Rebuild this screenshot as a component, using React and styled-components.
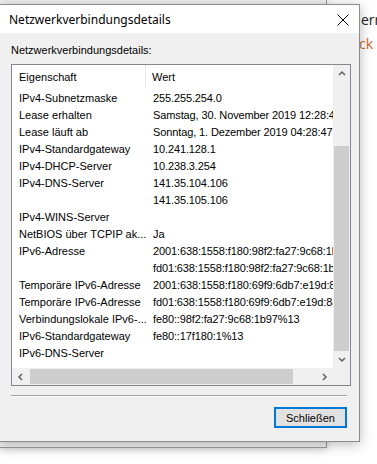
import styled, { createGlobalStyle } from 'styled-components';

const Global = createGlobalStyle`
  html, body { margin: 0; padding: 0; background: #fff; overflow: hidden; }
  #root { width: 377px; height: 464px; }
`;

const Desktop = styled.div`
  position: relative;
  width: 377px;
  height: 464px;
  background: #fff;
  overflow: hidden;
  font-family: 'Liberation Sans', Arial, sans-serif;
`;

const PageText = styled.div`
  position: absolute;
  left: ${p => p.$x}px;
  top: ${p => p.$y}px;
  white-space: nowrap;
  font-family: 'Open Sans', sans-serif;
  font-size: 14px;
  line-height: 18px;
  color: ${p => p.$color || '#222'};
`;

const BackWindow = styled.div`
  position: absolute;
  left: -2px;
  top: -2px;
  width: 328px;
  height: 449px;
  background: #f0f0f0;
  border-right: 1px solid #9a9a9a;
  border-bottom: 1px solid #9a9a9a;
  box-shadow: 0 2px 8px rgba(0, 0, 0, 0.18);
`;

const Dialog = styled.div`
  position: absolute;
  left: -1px;
  top: 4px;
  width: 359px;
  height: 436px;
  border: 1px solid #8c8c8c;
  background: #f0f0f0;
  box-shadow: 0 2px 12px rgba(0, 0, 0, 0.28);
  display: flex;
  flex-direction: column;
`;

const TitleBar = styled.div`
  height: 28px;
  background: #fff;
  display: flex;
  align-items: center;
  justify-content: space-between;
  padding: 0 10px 0 9px;
  font-family: 'Noto Sans', 'Open Sans', sans-serif;
  font-size: 12px;
  color: #000;
`;

const Close = styled.svg`
  width: 12px;
  height: 12px;
  margin-top: 1px;
`;

const Body = styled.div`
  flex: 1;
  display: flex;
  flex-direction: column;
  padding: 10px 10px 0 11px;
`;

const Label = styled.div`
  font-size: 11px;
  color: #000;
  height: 14px;
  line-height: 14px;
  margin-bottom: 7px;
`;

const ListView = styled.div`
  width: 338px;
  height: 320px;
  border: 1px solid #828790;
  background: #fff;
  display: grid;
  grid-template-columns: 1fr 17px;
  grid-template-rows: 1fr 17px;
`;

const Viewport = styled.div`
  overflow: hidden;
`;

const Header = styled.div`
  height: 24px;
  display: grid;
  grid-template-columns: 134px 1fr;
  font-size: 11px;
  color: #000;
  margin-bottom: 1px;
`;

const HeadCell = styled.div`
  display: flex;
  align-items: center;
  padding-left: ${p => (p.$first ? 7 : 6)}px;
  border-right: ${p => (p.$first ? '1px solid #e5e5e5' : 'none')};
  white-space: nowrap;
`;

const Row = styled.div`
  height: 17px;
  display: grid;
  grid-template-columns: 134px 1fr;
  font-size: 11px;
  line-height: 17px;
  color: #000;
`;

const Cell = styled.div`
  padding-left: 7px;
  white-space: nowrap;
  overflow: hidden;
  letter-spacing: ${p => (p.$first ? 0 : -0.12)}px;
`;

const VScroll = styled.div`
  background: #f0f0f0;
  display: flex;
  flex-direction: column;
  align-items: center;
`;

const HScroll = styled.div`
  background: #f0f0f0;
  display: flex;
  align-items: center;
`;

const Corner = styled.div`
  background: #f0f0f0;
`;

const Arrow = styled.div`
  width: 17px;
  height: 17px;
  flex: none;
  display: flex;
  align-items: center;
  justify-content: center;
`;

const VThumb = styled.div`
  width: 15px;
  margin-top: 64px;
  flex: 1;
  background: #cdcdcd;
`;

const HThumb = styled.div`
  height: 15px;
  width: 263px;
  margin-left: 1px;
  background: #cdcdcd;
`;

const Spacer = styled.div`
  flex: 1;
`;

const Separator = styled.div`
  width: 336px;
  height: 1px;
  background: #a0a0a0;
  border-bottom: 1px solid #fff;
  margin-top: 9px;
`;

const Footer = styled.div`
  display: flex;
  justify-content: flex-end;
  padding: 10px 1px 0 0;
`;

const Button = styled.button`
  width: 73px;
  height: 21px;
  box-sizing: border-box;
  border: 2px solid #0078d7;
  background: #e1e1e1;
  font-family: 'Liberation Sans', Arial, sans-serif;
  font-size: 11px;
  color: #000;
  padding: 0;
  margin-right: 1px;
`;

const Chevron = ({ dir }) => {
  const pts = {
    up: '1,5 4,2 7,5',
    down: '1,2 4,5 7,2',
    left: '5,1 2,4 5,7',
    right: '2,1 5,4 2,7',
  }[dir];
  return (
    <svg width="8" height="8" viewBox="0 0 8 8">
      <polyline points={pts} fill="none" stroke="#606060" strokeWidth="1.5" />
    </svg>
  );
};

const rows = [
  ['IPv4-Subnetzmaske', '255.255.254.0'],
  ['Lease erhalten', 'Samstag, 30. November 2019 12:28:47'],
  ['Lease läuft ab', 'Sonntag, 1. Dezember 2019 04:28:47'],
  ['IPv4-Standardgateway', '10.241.128.1'],
  ['IPv4-DHCP-Server', '10.238.3.254'],
  ['IPv4-DNS-Server', '141.35.104.106'],
  ['', '141.35.105.106'],
  ['IPv4-WINS-Server', ''],
  ['NetBIOS über TCPIP ak...', 'Ja'],
  ['IPv6-Adresse', '2001:638:1558:f180:98f2:fa27:9c68:1b97'],
  ['', 'fd01:638:1558:f180:98f2:fa27:9c68:1b97'],
  ['Temporäre IPv6-Adresse', '2001:638:1558:f180:69f9:6db7:e19d:8a2c'],
  ['Temporäre IPv6-Adresse', 'fd01:638:1558:f180:69f9:6db7:e19d:8a2c'],
  ['Verbindungslokale IPv6-...', 'fe80::98f2:fa27:9c68:1b97%13'],
  ['IPv6-Standardgateway', 'fe80::17f180:1%13'],
  ['IPv6-DNS-Server', ''],
];

export default function App() {
  return (
    <Desktop>
      <Global />
      <PageText $x={361} $y={11}>err</PageText>
      <PageText $x={359} $y={35} $color="#c8692e">ck :</PageText>
      <BackWindow />
      <Dialog>
        <TitleBar>
          <span>Netzwerkverbindungsdetails</span>
          <Close viewBox="0 0 12 12">
            <path d="M0.5 0.5 L11.5 11.5 M11.5 0.5 L0.5 11.5" stroke="#000" strokeWidth="1" />
          </Close>
        </TitleBar>
        <Body>
          <Label>Netzwerkverbindungsdetails:</Label>
          <ListView>
            <Viewport>
              <Header>
                <HeadCell $first>Eigenschaft</HeadCell>
                <HeadCell>Wert</HeadCell>
              </Header>
              {rows.map(([k, v], i) => (
                <Row key={i}>
                  <Cell $first>{k}</Cell>
                  <Cell>{v}</Cell>
                </Row>
              ))}
            </Viewport>
            <VScroll>
              <Arrow><Chevron dir="up" /></Arrow>
              <VThumb />
              <Arrow><Chevron dir="down" /></Arrow>
            </VScroll>
            <HScroll>
              <Arrow><Chevron dir="left" /></Arrow>
              <HThumb />
              <Spacer />
              <Arrow><Chevron dir="right" /></Arrow>
            </HScroll>
            <Corner />
          </ListView>
          <Separator />
          <Footer>
            <Button>Schließen</Button>
          </Footer>
        </Body>
      </Dialog>
    </Desktop>
  );
}
